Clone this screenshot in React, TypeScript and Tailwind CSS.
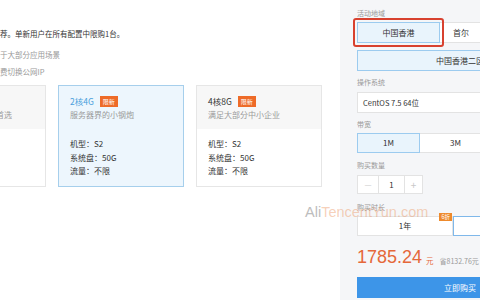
import React from 'react';

const font = { fontFamily: '"Noto Sans CJK SC", "Noto Sans", sans-serif' };

interface Plan {
  title: string;
  desc: string;
  active?: boolean;
}

const plans: Plan[] = [
  { title: '1核2G', desc: '个人站长及开发者首选' },
  { title: '2核4G', desc: '服务器界的小钢炮', active: true },
  { title: '4核8G', desc: '满足大部分中小企业' },
];

const PlanCard: React.FC<{ plan: Plan }> = ({ plan }) => (
  <div
    className={
      'w-[126px] h-[102px] shrink-0 border ' +
      (plan.active ? 'border-[#a6cfec] bg-[#edf6fd]' : 'border-[#e6e6e6] bg-white')
    }
  >
    <div className={'h-[43px] px-[11px] pt-[9px] ' + (plan.active ? '' : 'bg-[#f7f7f7]')}>
      <div className="flex items-center gap-[6px] h-[12px]">
        <span className={'text-[8.5px] leading-[12px] ' + (plan.active ? 'text-[#4a9fdc]' : 'text-[#333]')}>
          {plan.title}
        </span>
        <span className="bg-[#ee6b28] text-white text-[6px] leading-[11px] px-[3px]">限新</span>
      </div>
      <div className="mt-[3px] text-[8px] leading-[10px] text-[#9a9a9a] whitespace-nowrap">{plan.desc}</div>
    </div>
    <div className="px-[11px] pt-[8px] text-[8px] leading-[13.5px] text-[#333]">
      <div>机型：S2</div>
      <div>系统盘：50G</div>
      <div>流量：不限</div>
    </div>
  </div>
);

const Label: React.FC<{ children: React.ReactNode; className?: string }> = ({ children, className }) => (
  <div className={'h-[10px] text-[7px] leading-[10px] text-[#999] ' + (className ?? '')}>{children}</div>
);

export default function App() {
  return (
    <div className="relative w-[480px] h-[300px] overflow-hidden bg-white flex" style={font}>
      {/* left column */}
      <div className="w-[340px] shrink-0 pt-[29px]">
        <div className="h-[10px] text-[7.5px] leading-[10px] text-[#333] whitespace-nowrap">
          荐。单新用户在所有配置中限购1台。
        </div>
        <div className="mt-[11px] h-[10px] text-[7.5px] leading-[10px] text-[#999] whitespace-nowrap">于大部分应用场景</div>
        <div className="mt-[7px] h-[10px] text-[7.5px] leading-[10px] text-[#999] whitespace-nowrap">费切换公网IP</div>
        <div className="mt-[8px] ml-[-80px] flex gap-[12px]">
          {plans.map(p => (
            <PlanCard key={p.title} plan={p} />
          ))}
        </div>
      </div>

      {/* right column */}
      <div className="flex-1 bg-[#f5f6f8] pl-[17px] pt-[8px] overflow-hidden">
        <div className="w-[206px]">
          <Label>活动地域</Label>
          <div className="mt-[4px] flex h-[21px] text-[8px] text-[#333]">
            <div className="relative w-[83px] border border-[#9ccbef] bg-[#e9f4fc] flex items-center justify-center">
              中国香港
              <div className="absolute -inset-[5px] border-2 border-[#d8412f] rounded-[3px]" />
            </div>
            <div className="flex-1 border border-[#e3e3e3] border-l-0 bg-white flex items-center pl-[13px]">首尔</div>
          </div>
          <div className="mt-[7px] h-[21px] border border-[#9ccbef] bg-[#e9f4fc] flex items-center justify-center text-[8px] text-[#333]">
            中国香港二区
          </div>

          <Label className="mt-[6px]">操作系统</Label>
          <div className="mt-[5px] h-[21px] border border-[#e3e3e3] bg-white flex items-center px-[5px] text-[7.5px] text-[#333]">
            CentOS 7.5 64位
          </div>

          <Label className="mt-[6px]">带宽</Label>
          <div className="mt-[4px] flex h-[20px] text-[8px] text-[#333]">
            <div className="w-[63px] border border-[#9ccbef] bg-[#e9f4fc] flex items-center justify-center">1M</div>
            <div className="w-[72px] border border-[#e3e3e3] border-l-0 bg-white flex items-center justify-center">3M</div>
            <div className="flex-1 border border-[#e3e3e3] border-l-0 bg-white flex items-center justify-center">5M</div>
          </div>

          <Label className="mt-[7px]">购买数量</Label>
          <div className="mt-[5px] flex h-[19px] w-[66px] border border-[#e3e3e3] bg-white text-[8px]">
            <div className="w-[20px] flex items-center justify-center text-[#c8c8c8]">—</div>
            <div className="w-[27px] border-x border-[#e3e3e3] flex items-center justify-center text-[#333]">1</div>
            <div className="flex-1 flex items-center justify-center text-[#c8c8c8] text-[10px]">+</div>
          </div>

          <Label className="mt-[8px]">购买时长</Label>
          <div className="mt-[4px] flex h-[20px] text-[8px] text-[#333]">
            <div className="relative w-[96px] border border-[#e3e3e3] bg-white flex items-center justify-center">
              1年
              <span className="absolute right-0 top-[-4px] bg-[#ee8a2c] text-white text-[5.5px] leading-[8px] px-[2px]">6折</span>
            </div>
            <div className="flex-1 border border-[#7fb8ea] bg-white flex items-center justify-center">3年</div>
          </div>

          <div className="mt-[10px] h-[22px] flex items-end gap-[4px] pb-[1px]">
            <span className="text-[18px] leading-[20px] text-[#e5683a]" style={{ fontFamily: '"Liberation Sans", Arial, sans-serif' }}>
              1785.24
            </span>
            <span className="text-[7.5px] leading-[12px] text-[#e5683a]">元</span>
            <span className="ml-[2px] text-[7px] leading-[12px] text-[#999]">省8132.76元</span>
          </div>

          <div className="mt-[9px] h-[21px] bg-[#3d95e8] flex items-center justify-center text-[8px] text-white">
            立即购买
          </div>
        </div>
      </div>

      {/* watermark */}
      <div
        className="absolute left-[305px] top-[203px] text-[14.5px] leading-[18px] whitespace-nowrap pointer-events-none"
        style={{ fontFamily: '"Liberation Sans", Arial, sans-serif' }}
      >
        <span className="text-[#bdbdbd]">Ali</span>
        <span className="text-[rgba(236,150,100,0.45)]">TencentYun.com</span>
      </div>
    </div>
  );
}
